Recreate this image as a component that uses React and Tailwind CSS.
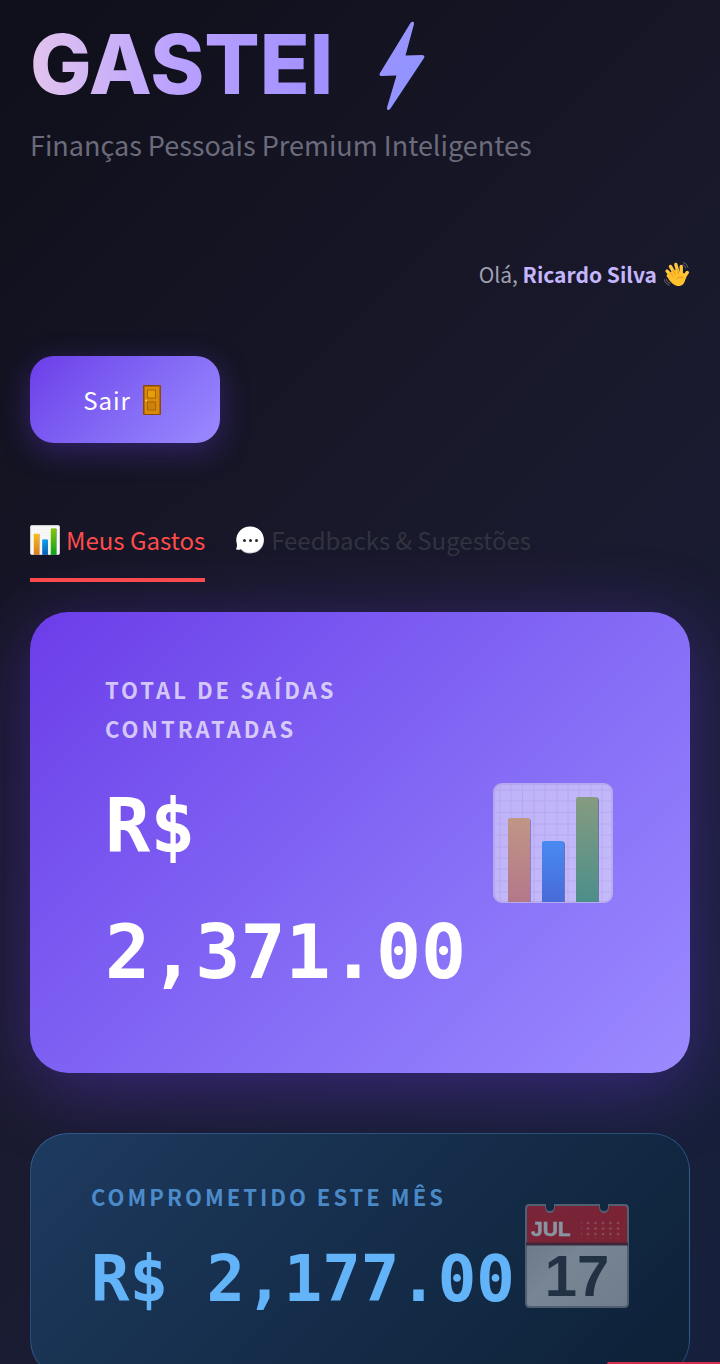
import { useId, useState } from "react";

const SANS = "font-['Noto_Sans_CJK_SC','Noto_Sans',sans-serif]";
const MONO = "font-['DejaVu_Sans_Mono',monospace]";

function BoltIcon({ className }) {
    const id = useId();
    return (
        <svg viewBox="0 0 46 90" className={className} aria-hidden="true">
            <defs>
                <linearGradient id={id} x1="0" y1="0" x2="1" y2="1">
                    <stop offset="0" stopColor="#9d92ff" />
                    <stop offset="1" stopColor="#8c94ff" />
                </linearGradient>
            </defs>
            <path
                d="M31.500 3C33 1 35.500 1.500 35 4L26.500 35.500L43 35C45 35 46 36.500 45 38L11.500 88.500C10 91 7.500 90 8 87.500L17.500 55.500L2.500 56C.5 56 0 54.500 1 53Z"
                fill={`url(#${id})`}
            />
        </svg>
    );
}

function WaveIcon({ className }) {
    return (
        <svg viewBox="0 0 40 40" className={className} aria-hidden="true">
            <g stroke="#ffc83d" strokeLinecap="round" fill="none" strokeWidth="5">
                <path d="M17 26L6 15" />
                <path d="M19 22L11 8" />
                <path d="M23 20L19 5" />
                <path d="M27 22L27 8" />
                <path d="M30 28C32 24 32 21 36 17" />
            </g>
            <path d="M6 20L17 13L31 18L33 25C33 33 28 38 21 37C13 35 9 28 5 22Z" fill="#ffc02e" />
            <path d="M10 17L16 23M14 13L19 20M21 11L23 19M20 27Q23 22 30 25" fill="none" stroke="#d98512" strokeWidth="1" />
            <path d="M30 2Q36 4 37 10M29 5Q33 7 34 11M2 27Q3 34 10 36M5 27Q6 32 11 33" fill="none" stroke="#77716c" strokeWidth="1.300" />
        </svg>
    );
}

function DoorIcon({ className }) {
    return (
        <svg viewBox="0 0 18 30" className={className} aria-hidden="true">
            <rect width="18" height="30" rx="1" fill="#8b4a0b" />
            <rect x="1.500" y="1.500" width="15" height="27.500" fill="#d98a08" />
            <rect x="4.500" y="5" width="8" height="8" fill="#e79e08" stroke="#a7620a" />
            <rect x="4.500" y="17" width="8" height="8" fill="#cf820a" stroke="#a7620a" />
            <circle cx="3" cy="15.500" r="1" fill="#f9d35b" />
        </svg>
    );
}

function ChartIcon({ className }) {
    const id = useId();
    return (
        <svg viewBox="0 0 120 120" className={className} aria-hidden="true">
            <defs>
                <linearGradient id={`${id}a`} x2="0" y2="1">
                    <stop stopColor="#f9bd16" />
                    <stop offset="1" stopColor="#dc7b1d" />
                </linearGradient>
                <linearGradient id={`${id}b`} x2="0" y2="1">
                    <stop stopColor="#0aa2ed" />
                    <stop offset="1" stopColor="#0560b8" />
                </linearGradient>
                <linearGradient id={`${id}c`} x2="0" y2="1">
                    <stop stopColor="#84c40b" />
                    <stop offset="1" stopColor="#09a51b" />
                </linearGradient>
            </defs>
            <rect x="1" y="1" width="118" height="118" rx="8" fill="#fafafa" stroke="#e2e2e6" strokeWidth="2" />
            <path
                d="M7 2V118M18 2V118M29.500 2V118M41 2V118M52 2V118M64 2V118M75 2V118M86 2V118M98 2V118M109 2V118M2 7H118M2 18H118M2 29.500H118M2 41H118M2 52H118M2 64H118M2 75H118M2 86H118M2 98H118M2 109H118"
                stroke="#e2e2ea"
            />
            <path d="M17 119V38Q17 36 19 36H36Q38 36 38 38V119Z" fill="#8b88a5" />
            <path d="M51 119V61Q51 59 53 59H70Q72 59 72 61V119Z" fill="#4f6590" />
            <path d="M85 119V17Q85 15 87 15H104Q106 15 106 17V119Z" fill="#527260" />
            <path d="M15 119V37Q15 35 17 35H35Q37 35 37 37V119Z" fill={`url(#${id}a)`} />
            <path d="M49 119V60Q49 58 51 58H69Q71 58 71 60V119Z" fill={`url(#${id}b)`} />
            <path d="M83 119V16Q83 14 85 14H103Q105 14 105 16V119Z" fill={`url(#${id}c)`} />
        </svg>
    );
}

function SpeechIcon({ className }) {
    return (
        <svg viewBox="0 0 30 30" className={className} aria-hidden="true">
            <path d="M15 2C23.500 2 29 7.500 29 15S23.500 28.500 15 28.500C11 28.500 8 27 6 24.500C4.500 25 2.500 25 1 24.500C2.500 22.500 2 19 1.500 16C1 8 7 2 15 2Z" fill="#c9c9ce" />
            <path d="M15 1.500C23 1.500 28.500 7 28.500 14.500S23 27.500 15 27.500C11 27.500 8 26 6 23.500C4.500 24.500 2.500 24.500 1 24C2.500 22 2 19 1.500 16C1 8 7 1.500 15 1.500Z" fill="#fff" />
            <circle cx="9.500" cy="15.500" r="1.500" fill="#282828" />
            <circle cx="15.500" cy="15.500" r="1.500" fill="#282828" />
            <circle cx="21.500" cy="15.500" r="1.500" fill="#282828" />
        </svg>
    );
}

function CalendarIcon({ className }) {
    const id = useId();
    return (
        <svg viewBox="0 0 104 104" className={className} aria-hidden="true">
            <defs>
                <linearGradient id={id} x2="1" y2="1">
                    <stop stopColor="#b4bac2" />
                    <stop offset=".5" stopColor="#dfe3e7" />
                    <stop offset="1" stopColor="#cfd3d8" />
                </linearGradient>
                <pattern id={`${id}dots`} width="7.500" height="5.500" patternUnits="userSpaceOnUse">
                    <circle cx="3" cy="2.500" r="1.200" fill="#f08a91" />
                </pattern>
            </defs>
            <path
                d="M4 1H20V4Q21 8 25 8T30 4V1H74V4Q75 8 79 8T84 4V1H100Q103 1 103 5V99Q103 103 99 103H5Q1 103 1 99V5Q1 1 4 1Z"
                fill={`url(#${id})`}
                stroke="#8f97a3"
                strokeWidth="2"
            />
            <path d="M4 2H20V4Q21 9 25 9T30 4V2H74V4Q75 9 79 9T84 4V2H100Q102 2 102 5V39H2V5Q2 2 4 2Z" fill="#e0202b" />
            <path d="M1 40H103" stroke="#6e2434" strokeWidth="3" />
            <rect x="56" y="15" width="43" height="20" fill={`url(#${id}dots)`} />
            <text x="6" y="32" fontSize="21" fontWeight="700" fill="#fff" stroke="#fff" strokeWidth=".5" className="font-['Liberation_Sans',sans-serif]">JUL</text>
            <text x="52" y="92" fontSize="58" fontWeight="700" textAnchor="middle" fill="#353b48" className="font-['Liberation_Sans',sans-serif]">17</text>
        </svg>
    );
}

function App() {
    const [aba, setAba] = useState("gastos");

    const corAba = (nome) =>
        aba === nome ? "border-[#ff4b4b] text-[#ff4b4b]" : "border-transparent text-[#31333f]";

    return (
        <div className={`min-h-screen overflow-hidden bg-linear-135 from-[#0f0f1a] via-[#1a1a2e] to-[#16213e] px-[30px] pb-10 ${SANS}`}>

            {/* TOPO */}
            <header className="pt-5">
                <h1 className="flex items-center gap-[46px] font-['Inter',sans-serif] text-[82px] leading-[90px] font-extrabold">
                    <span className="bg-linear-to-r from-[#e2c4ed] via-[#b8a0ff] to-[#a08fff] bg-clip-text text-transparent">GASTEI</span>
                    <BoltIcon className="h-[90px] w-[46px]" />
                </h1>
                <p className="mt-[14px] text-[27px] leading-[42px] text-[#6b6b7b]">
                    Finanças Pessoais Premium Inteligentes
                </p>
            </header>

            {/* USUÁRIO */}
            <div className="mt-[90px] flex items-center justify-end gap-1.5 text-[21px] leading-9 text-[#a0a0b0]">
                <span>Olá, <strong className="font-bold text-[#c4b5fd]">Ricardo Silva</strong></span>
                <WaveIcon className="size-[27px]" />
            </div>

            <button
                type="button"
                className="mt-16 flex h-[87px] w-[190px] items-center justify-center gap-3 rounded-[24px] bg-linear-135 from-[#6c3ce9] to-[#9b8aff] pr-1.5 text-[24px] tracking-[1px] text-white shadow-[0_8px_30px_rgba(108,60,233,0.35)]"
            >
                Sair
                <DoorIcon className="h-[30px] w-[18px]" />
            </button>

            {/* ABAS */}
            <div role="tablist" className="mt-[75px] flex gap-[30px] text-[24px] leading-[44px]">
                <button
                    type="button"
                    role="tab"
                    aria-selected={aba === "gastos"}
                    onClick={() => setAba("gastos")}
                    className={`flex items-center gap-1.5 border-b-4 pb-4 ${corAba("gastos")}`}
                >
                    <ChartIcon className="size-[30px]" />
                    Meus Gastos
                </button>
                <button
                    type="button"
                    role="tab"
                    aria-selected={aba === "feedbacks"}
                    onClick={() => setAba("feedbacks")}
                    className={`flex items-center gap-1.5 border-b-4 pb-4 ${corAba("feedbacks")}`}
                >
                    <SpeechIcon className="size-[30px]" />
                    Feedbacks &amp; Sugestões
                </button>
            </div>

            {/* CARDS */}
            <main className="mt-[30px] flex flex-col gap-[60px]">
                <section className="flex items-center justify-between rounded-[38px] bg-linear-135 from-[#6c3ce9] to-[#9b8aff] px-[75px] py-[58px] shadow-[0_15px_75px_rgba(108,60,233,0.4)]">
                    <div className="min-w-0 flex-1">
                        <h2 className="text-[22px] leading-[39px] font-bold tracking-[3px] text-white/70 uppercase">
                            Total de saídas contratadas
                        </h2>
                        <p className={`mt-[15px] text-[75px] leading-[126px] font-bold text-white ${MONO}`}>
                            R$ 2,371.00
                        </p>
                    </div>
                    <ChartIcon className="mr-[2px] size-[120px] shrink-0 opacity-50" />
                </section>

                <section className="flex items-center justify-between rounded-[38px] border border-[#63b3ff]/30 bg-linear-135 from-[#1e3a5f] to-[#0d2137] px-[60px] py-[43px]">
                    <div>
                        <h2 className="text-[22px] leading-[39px] font-bold tracking-[3px] text-[#63b3ff]/70 uppercase">
                            Comprometido este mês
                        </h2>
                        <p className={`mt-2 text-[64px] leading-[110px] font-bold whitespace-nowrap text-[#63b3f8] ${MONO}`}>
                            R$ 2,177.00
                        </p>
                    </div>
                    <CalendarIcon className="size-[104px] shrink-0 opacity-50" />
                </section>
            </main>

            <div className="fixed right-0 bottom-0 h-0.5 w-[113px] rounded-tl-sm bg-[#d5304f]" />
        </div>
    );
}

export default App;
